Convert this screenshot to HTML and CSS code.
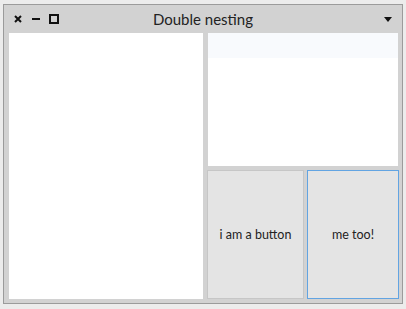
FILE: index.html
```html
<!DOCTYPE html>
<html lang="en">
<head>
   <meta charset="UTF-8">
   <meta name="viewport" content="width=device-width, initial-scale=1.0">
   <title>Double nesting</title>
   <link rel="stylesheet" href="styles.css">
</head>
<body>
   <div class="window">
      <div class="titlebar">
         <div class="controls">
            <svg class="ctl" width="10" height="10" viewBox="0 0 10 10">
               <path d="M2 2 L8 8 M8 2 L2 8" stroke="#111" stroke-width="2"/>
            </svg>
            <svg class="ctl" width="10" height="10" viewBox="0 0 10 10">
               <path d="M1 5 H9" stroke="#111" stroke-width="2"/>
            </svg>
            <svg class="ctl" width="10" height="10" viewBox="0 0 10 10">
               <rect x="1" y="1" width="8" height="8" fill="none" stroke="#111" stroke-width="2"/>
            </svg>
         </div>
         <div class="title">Double nesting</div>
         <svg class="menu" width="8" height="5" viewBox="0 0 8 5">
            <path d="M0 0 H8 L4 5 Z" fill="#111"/>
         </svg>
      </div>
      <div class="content">
         <div class="panel left"></div>
         <div class="column">
            <div class="panel top">
               <div class="strip"></div>
            </div>
            <div class="buttons">
               <button class="btn first">i am a button</button>
               <button class="btn focused">me too!</button>
            </div>
         </div>
      </div>
   </div>
</body>
</html>
```

FILE: styles.css
```css
body {
   margin: 0;
   background-color: #ececec;
   font-family: Lato, "Noto Sans", sans-serif;
}

.window {
   margin: 4px 0 0 3px;
   width: 400px;
   height: 300px;
   box-sizing: border-box;
   border: 1px solid #9b9b9b;
   background: #d2d2d2;
   display: flex;
   flex-direction: column;
}

.titlebar {
   height: 28px;
   display: flex;
   align-items: center;
   position: relative;
}

.controls {
   display: flex;
   align-items: center;
   gap: 8px;
   padding-left: 9px;
}

.title {
   position: absolute;
   left: 0;
   right: 0;
   text-align: center;
   font-size: 15px;
   color: #222222;
   pointer-events: none;
}

.menu {
   margin-left: auto;
   margin-right: 10px;
}

.content {
   flex: 1;
   display: flex;
   gap: 5px;
   padding: 0 4px 4px 5px;
}

.panel {
   background: #ffffff;
}

.left {
   width: 194px;
}

.column {
   flex: 1;
   display: flex;
   flex-direction: column;
   gap: 4px;
}

.top {
   height: 133px;
}

.strip {
   height: 25px;
   background: #f8fafd;
}

.buttons {
   flex: 1;
   display: flex;
   gap: 3px;
   margin: 0 -1px;
}

.btn {
   box-sizing: border-box;
   background: #e4e4e4;
   border: 1px solid #c6c6c6;
   font-family: inherit;
   font-size: 12.5px;
   color: #222222;
   padding: 0;
}

.first {
   width: 97px;
}

.focused {
   flex: 1;
   border-color: #62a4e2;
}
```
